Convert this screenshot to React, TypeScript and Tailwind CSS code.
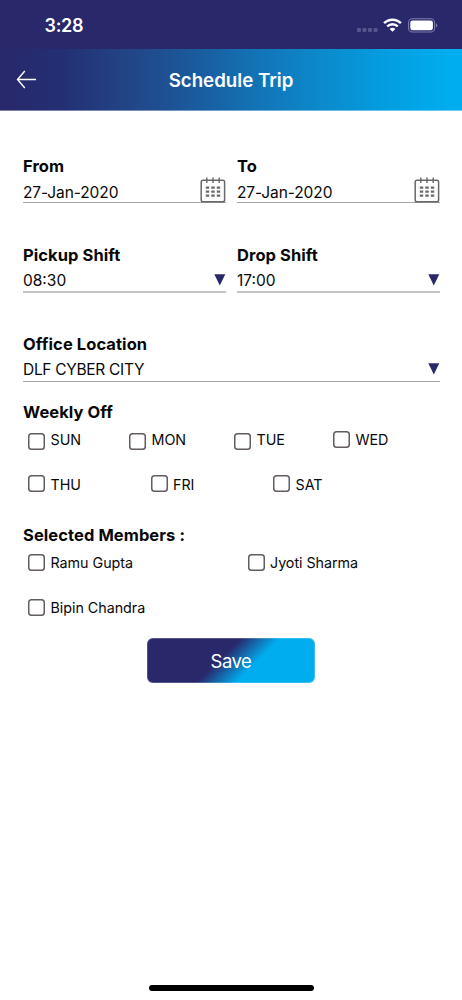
import React from "react";

function CalendarIcon() {
  return (
    <svg className="h-[26px] w-[26px] shrink-0" viewBox="0 0 26 26" fill="none" stroke="#68676a">
      <rect x="1.2" y="3.2" width="23.4" height="21.6" rx="1.8" strokeWidth="1.5" />
      <path d="M6.8 0.5v5.5M13 0.5v5.5M19.2 0.5v5.5" strokeWidth="1.4" />
      <path
        d="M5.8 10.7h3.4M11.3 10.7h3.4M16.8 10.7h3.4M5.8 14.7h3.4M11.3 14.7h3.4M16.8 14.7h3.4M5.8 18.7h3.4M11.3 18.7h3.4M16.8 18.7h3.4"
        strokeWidth="2.3"
      />
    </svg>
  );
}

function Triangle() {
  return (
    <svg className="mt-[4px] h-[12px] w-[12px] shrink-0" viewBox="0 0 12 12">
      <path d="M0.3 0.2H11.3L5.8 11.4Z" fill="#28286b" />
    </svg>
  );
}

const label = "h-5 text-[16.5px] leading-5 font-bold tracking-[0.08px] whitespace-nowrap";
const value = "text-[15.5px] leading-5 whitespace-nowrap";

function DateField({ name, date }: { name: string; date: string }) {
  return (
    <div className="w-[203px]">
      <div className={label}>{name}</div>
      <div className="flex h-[27px] items-end justify-between border-b border-[#a5a5a5]">
        <span className={value + " -mb-px tracking-[-0.1px]"}>{date}</span>
        <div className="-mb-px h-[26px]">
          <CalendarIcon />
        </div>
      </div>
    </div>
  );
}

function SelectField({
  name,
  text,
  half,
  textClass = "",
}: {
  name: string;
  text: string;
  half?: boolean;
  textClass?: string;
}) {
  return (
    <div className={half ? "w-[203px]" : "w-full"}>
      <div className={label}>{name}</div>
      <div
        className={
          "flex h-[28px] items-start justify-between pt-[5px] " +
          (half ? "border-b-2 border-[#c4c4c4]" : "border-b border-[#a5a5a5]")
        }
      >
        <span className={value + " mt-px " + textClass}>{text}</span>
        <Triangle />
      </div>
    </div>
  );
}

function Check({ text, className = "", boxClass = "" }: { text: string; className?: string; boxClass?: string }) {
  return (
    <label className={"flex h-5 items-start " + className}>
      <span className={"h-[17px] w-[17px] shrink-0 rounded-[3.5px] shadow-[inset_0_0_0_1.5px_#625b60] " + boxClass} />
      <span className="ml-[5.5px] text-[14.3px] leading-5 tracking-[-0.03px] whitespace-nowrap">{text}</span>
    </label>
  );
}

export default function App() {
  return (
    <div className="flex h-[1000px] w-[462px] flex-col overflow-hidden bg-white font-['Inter',sans-serif] text-[#080808]">
      <div className="flex h-[49px] shrink-0 items-start justify-between bg-[#28286b] pr-[24px] pl-[44.5px] text-white">
        <span className="mt-[15px] text-[18px] leading-[22px] font-semibold tracking-[-0.3px]">3:28</span>
        <div className="mt-[18px] flex items-start">
          <svg className="mt-[9px] h-[6px] w-[22px]" viewBox="0 0 22 6" fill="#56568f">
            <rect x="1" y="1" width="4" height="4" rx="1.2" />
            <rect x="6.5" y="1" width="4" height="4" rx="1.2" />
            <rect x="12" y="1" width="4" height="4" rx="1.2" />
            <rect x="17.5" y="1" width="4" height="4" rx="1.2" />
          </svg>
          <svg className="ml-[5px] h-[14px] w-[19px]" viewBox="0 0 19 14" fill="none" stroke="#fff">
            <path d="M1.1 5.2C5.8 .5 13.2 .5 17.9 5.2" strokeWidth="2.5" />
            <path d="M4.2 8.4C7.2 5.5 11.8 5.5 14.8 8.4" strokeWidth="2.4" />
            <path d="M6.6 10.9C8.2 9.3 10.8 9.3 12.4 10.9L9.5 13.8Z" fill="#fff" stroke="none" />
          </svg>
          <svg className="ml-[6px] h-[15px] w-[30px]" viewBox="0 0 30 15" fill="none">
            <rect x="0.6" y="0.8" width="26" height="13.2" rx="3.8" stroke="#7d7dac" strokeWidth="1.1" />
            <rect x="2.3" y="2.5" width="22.6" height="9.8" rx="2.2" fill="#fff" />
            <path d="M28 5.2v4.4c1.8-.7 1.8-3.7 0-4.4Z" fill="#7d7dac" />
          </svg>
        </div>
      </div>

      <div className="flex h-[62px] shrink-0 items-center border-b border-white/40 bg-[linear-gradient(90deg,#28286b_0%,#242f73_13%,#214889_30%,#185fa2_45%,#1371b3_54%,#0c89cb_69%,#039ddf_83%,#00aeef_98%)] text-white">
        <svg className="ml-[16px] h-[20px] w-[21px]" viewBox="0 0 21 20" fill="none" stroke="#fff" strokeWidth="1.4">
          <path d="M20 9.5H1.5M8.8 1L1.5 9.5L8.8 18" />
        </svg>
        <h1 className="mt-[2px] mr-[37px] flex-1 text-center text-[18.7px] leading-6 font-semibold">Schedule Trip</h1>
      </div>

      <div className="flex flex-1 flex-col pt-[45px] pl-[23px]">
        <div className="flex h-[89px] w-[417px] justify-between">
          <DateField name="From" date="27-Jan-2020" />
          <DateField name="To" date="27-Jan-2020" />
        </div>
        <div className="flex h-[89px] w-[417px] justify-between">
          <SelectField name="Pickup Shift" text="08:30" half />
          <SelectField name="Drop Shift" text="17:00" half />
        </div>
        <div className="h-[68px] w-[417px]">
          <SelectField name="Office Location" text="DLF CYBER CITY" textClass="tracking-[-0.3px]" />
        </div>

        <div className={label}>Weekly Off</div>
        <div className="mt-[8px] flex pl-[5px]">
          <Check text="SUN" className="w-[101px]" boxClass="mt-[3px]" />
          <Check text="MON" className="w-[105px]" boxClass="mt-[3px]" />
          <Check text="TUE" className="w-[99px]" boxClass="mt-[3px]" />
          <Check text="WED" boxClass="mt-[1px]" />
        </div>
        <div className="mt-[25px] flex pl-[5px]">
          <Check text="THU" className="w-[122.5px]" />
          <Check text="FRI" className="w-[122.5px]" />
          <Check text="SAT" />
        </div>

        <div className={label + " mt-[30px]"}>Selected Members :</div>
        <div className="mt-[8px] grid w-[417px] grid-cols-[219.5px_1fr] gap-y-[25px] pl-[5px]">
          <Check text="Ramu Gupta" boxClass="mt-[1px]" />
          <Check text="Jyoti Sharma" boxClass="mt-[1px]" />
          <Check text="Bipin Chandra" boxClass="mt-[1px]" />
        </div>

        <button className="mt-[20px] ml-[124px] h-[45px] w-[168px] rounded-[6px] bg-[linear-gradient(135deg,#28286b_44%,#00aeef_63%)] pt-[2px] text-[18.5px] tracking-[-0.5px] text-white shadow-[inset_0_0_0_1px_rgba(255,255,255,0.2)]">
          Save
        </button>
      </div>

      <div className="mb-[9px] ml-[148.5px] h-[6px] w-[165px] shrink-0 rounded-full bg-black" />
    </div>
  );
}
